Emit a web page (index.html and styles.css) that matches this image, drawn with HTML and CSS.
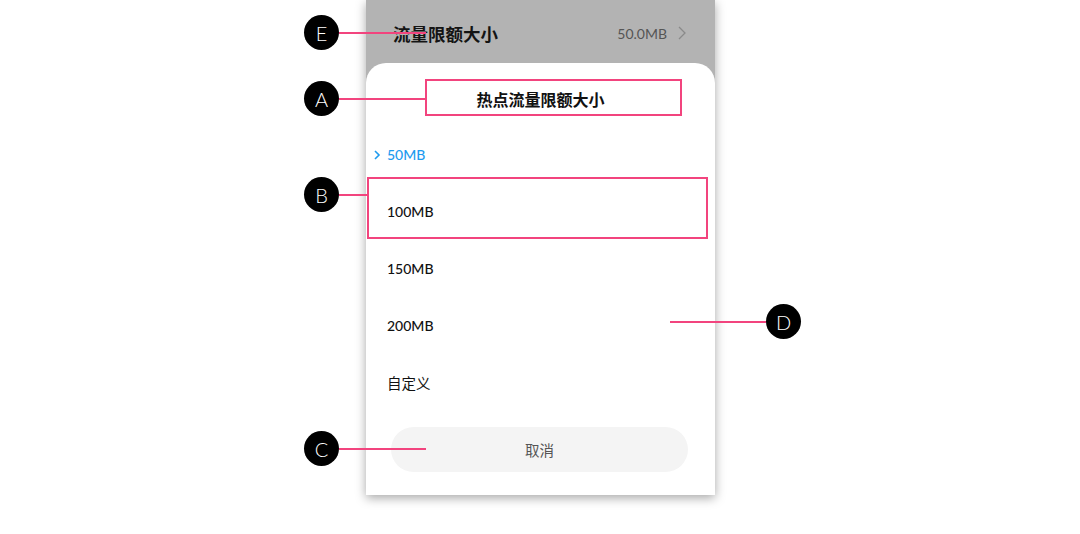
FILE: index.html
```html
<!DOCTYPE html>
<html lang="zh-CN">
<head>
  <meta charset="UTF-8" />
  <title>热点流量限额大小</title>
  <link rel="stylesheet" href="styles.css">
</head>
<body>
  <div class="stage">
    <div class="phone">
      <div class="backdrop">
        <span class="setting-name">流量限额大小</span>
        <span class="setting-value">50.0MB
          <svg class="chev" width="8" height="14" viewBox="0 0 8 14"><path d="M1 1l6 6-6 6" fill="none" stroke="#8a8a8a" stroke-width="1.3"/></svg>
        </span>
      </div>

      <div class="sheet">
        <div class="sheet-title">热点流量限额大小</div>
        <ul class="options">
          <li class="selected">
            <svg class="tick" width="7" height="10" viewBox="0 0 7 10"><path d="M1 1l4 4-4 4" fill="none" stroke="#1e9bef" stroke-width="1.6"/></svg>
            50MB
          </li>
          <li>100MB</li>
          <li>150MB</li>
          <li>200MB</li>
          <li class="zh">自定义</li>
        </ul>
        <button class="cancel">取消</button>
      </div>
    </div>

    <!-- annotations -->
    <div class="mark mark-e"><span class="dot">E</span><span class="line"></span></div>
    <div class="mark mark-a"><span class="dot">A</span><span class="line"></span></div>
    <div class="box box-a"></div>
    <div class="mark mark-b"><span class="dot">B</span><span class="line"></span></div>
    <div class="box box-b"></div>
    <div class="mark mark-c"><span class="dot">C</span><span class="line"></span></div>
    <div class="mark mark-d"><span class="line"></span><span class="dot">D</span></div>
  </div>
</body>
</html>
```

FILE: styles.css
```css
* {
  box-sizing: border-box;
}

body {
  margin: 0;
  background: #fff;
  font-family: Lato, "Noto Sans CJK SC", sans-serif;
  color: #111;
}

.stage {
  position: relative;
  width: 1080px;
  height: 534px;
  display: flex;
  justify-content: center;
}

.phone {
  width: 349px;
  height: 495px;
  margin-left: 1px;
  background: #b3b3b3;
  display: flex;
  flex-direction: column;
  box-shadow: 0 3px 10px rgba(0, 0, 0, 0.35);
}

.backdrop {
  height: 63px;
  display: flex;
  align-items: center;
  justify-content: space-between;
  padding: 3px 29px 0 27px;
}

.setting-name {
  font-size: 17.5px;
  font-weight: 700;
  color: #141414;
}

.setting-value {
  display: flex;
  align-items: center;
  gap: 11px;
  font-size: 14px;
  color: #555;
}

.sheet {
  flex: 1;
  background: #fff;
  border-radius: 20px 20px 0 0;
  display: flex;
  flex-direction: column;
  padding: 0 27px 23px 25px;
}

.sheet-title {
  padding: 27px 0 16px;
  line-height: 20px;
  text-align: center;
  font-size: 16px;
  font-weight: 700;
  margin-left: 2px;
}

.options {
  list-style: none;
  margin: 0 0 0 -25px;
  padding: 0;
}

.options li {
  height: 57px;
  display: flex;
  align-items: center;
  padding-left: 21px;
  font-size: 14px;
  font-weight: 500;
  color: #111;
  position: relative;
}

.options li.zh {
  font-size: 14.5px;
  font-weight: 400;
}

.options li.selected {
  color: #1e9bef;
}

.tick {
  position: absolute;
  left: 8px;
  top: 24px;
}

.cancel {
  margin-top: 16px;
  height: 45px;
  border: none;
  border-radius: 23px;
  background: #f4f4f4;
  color: #555;
  font-family: inherit;
  font-size: 14.5px;
}

.mark {
  position: absolute;
  display: flex;
  align-items: center;
}

.dot {
  width: 35px;
  height: 35px;
  border-radius: 50%;
  background: #000;
  color: #fff;
  display: flex;
  align-items: center;
  justify-content: center;
  font-size: 20px;
  font-weight: 300;
}

.line {
  height: 2px;
  background: #f2447e;
}

.mark-e { left: 304px; top: 15px; }
.mark-a { left: 304px; top: 81px; }
.mark-b { left: 304px; top: 177px; }
.mark-c { left: 304px; top: 431px; }
.mark-d { left: 670px; top: 304px; }

.mark-e .line, .mark-a .line, .mark-c .line { width: 87px; }
.mark-b .line { width: 29px; }
.mark-d .line { width: 96px; }

.box {
  position: absolute;
  border: 2px solid #f2447e;
}

.box-a {
  left: 425px;
  top: 79px;
  width: 257px;
  height: 37px;
}

.box-b {
  left: 367px;
  top: 177px;
  width: 341px;
  height: 62px;
}
```
